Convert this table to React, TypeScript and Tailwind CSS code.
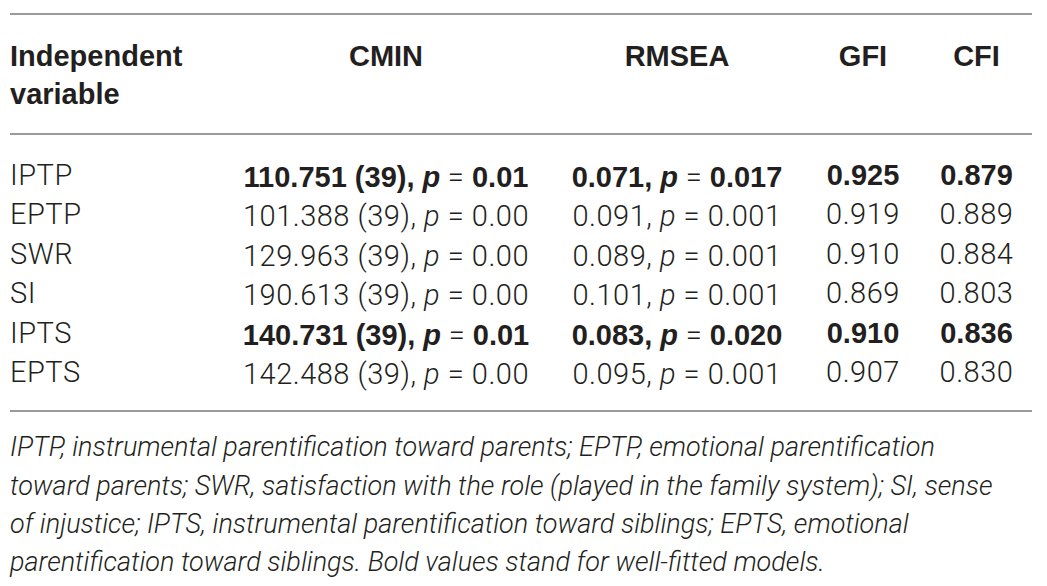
import React from "react";

const light = "font-['Roboto','Liberation_Sans',sans-serif] font-light tracking-[0.5px]";
const bold = "font-['Liberation_Sans','Arial',sans-serif] font-bold";

type Row = { v: string; cmin: [string, string]; rmsea: [string, string]; gfi: string; cfi: string; b: boolean };

const rows: Row[] = [
  { v: "IPTP", cmin: ["110.751 (39),", "0.01"], rmsea: ["0.071,", "0.017"], gfi: "0.925", cfi: "0.879", b: true },
  { v: "EPTP", cmin: ["101.388 (39),", "0.00"], rmsea: ["0.091,", "0.001"], gfi: "0.919", cfi: "0.889", b: false },
  { v: "SWR", cmin: ["129.963 (39),", "0.00"], rmsea: ["0.089,", "0.001"], gfi: "0.910", cfi: "0.884", b: false },
  { v: "SI", cmin: ["190.613 (39),", "0.00"], rmsea: ["0.101,", "0.001"], gfi: "0.869", cfi: "0.803", b: false },
  { v: "IPTS", cmin: ["140.731 (39),", "0.01"], rmsea: ["0.083,", "0.020"], gfi: "0.910", cfi: "0.836", b: true },
  { v: "EPTS", cmin: ["142.488 (39),", "0.00"], rmsea: ["0.095,", "0.001"], gfi: "0.907", cfi: "0.830", b: false },
];

function PVal({ pre, val, b }: { pre: string; val: string; b: boolean }) {
  const f = b ? bold : light;
  return (
    <span className="whitespace-pre">
      <span className={f}>{pre} </span>
      <span className={`${f} italic`}>p</span>
      <span className={light}> = </span>
      <span className={f}>{val}</span>
    </span>
  );
}

export default function App() {
  const grid = "grid grid-cols-[213px_326px_256px_116px_111px]";
  return (
    <div className="w-[1047px] h-[586px] bg-white pl-[10px] pr-[15px] pt-[13px] text-[#231f20] overflow-hidden">
      <div className="h-[2px] bg-[#9a9a9a]" />
      <div className={`${grid} pt-[22px] pb-[20px] text-[29px] leading-[38px] ${bold}`}>
        <div>
          Independent
          <br />
          variable
        </div>
        <div className="text-center">CMIN</div>
        <div className="text-center">RMSEA</div>
        <div className="text-center">GFI</div>
        <div className="text-center">CFI</div>
      </div>
      <div className="h-[2px] bg-[#9a9a9a]" />
      <div className="pt-[21px] pb-[18px] text-[29px]">
        {rows.map((r) => (
          <div key={r.v} className={`${grid} h-[39.4px] leading-[39.4px]`}>
            <div className={light}>{r.v}</div>
            <div className="text-center">
              <PVal pre={r.cmin[0]} val={r.cmin[1]} b={r.b} />
            </div>
            <div className="text-center">
              <PVal pre={r.rmsea[0]} val={r.rmsea[1]} b={r.b} />
            </div>
            <div className={`text-center ${r.b ? bold : light}`}>{r.gfi}</div>
            <div className={`text-center ${r.b ? bold : light}`}>{r.cfi}</div>
          </div>
        ))}
      </div>
      <div className="h-[2px] bg-[#9a9a9a]" />
      <p className={`pt-[16px] text-[27px] leading-[38.3px] italic whitespace-nowrap font-['Roboto','Liberation_Sans',sans-serif] font-light`}>
        IPTP, instrumental parentification toward parents; EPTP, emotional parentification
        <br />
        toward parents; SWR, satisfaction with the role (played in the family system); SI, sense
        <br />
        of injustice; IPTS, instrumental parentification toward siblings; EPTS, emotional
        <br />
        parentification toward siblings. Bold values stand for well-fitted models.
      </p>
    </div>
  );
}
